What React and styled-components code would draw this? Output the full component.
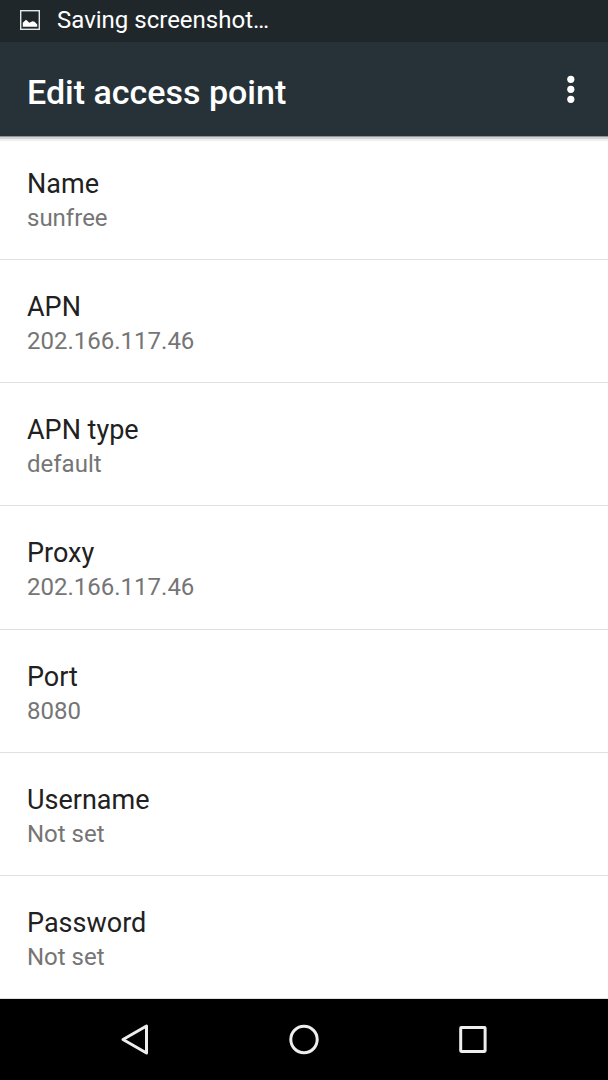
import React from "react";
import styled, { createGlobalStyle } from "styled-components";

const settings = [
  { label: "Name", value: "sunfree" },
  { label: "APN", value: "202.166.117.46" },
  { label: "APN type", value: "default" },
  { label: "Proxy", value: "202.166.117.46" },
  { label: "Port", value: "8080" },
  { label: "Username", value: "Not set" },
  { label: "Password", value: "Not set" },
];

export default function App() {
  return (
    <Screen>
      <GlobalStyle />
      <StatusBar>
        <svg width="20" height="20" viewBox="0 0 20 20" aria-hidden="true">
          <rect x="0.7" y="0.7" width="18.6" height="18.6" fill="none" stroke="#e4e6e7" strokeWidth="1.4" />
          <path d="M2.8 16.8v-4L6 9.8l3.4 3 3-1.6 2.2.6 2.6 2.6v2.4z" fill="#fff" />
        </svg>
        <span>Saving screenshot…</span>
      </StatusBar>

      <Toolbar>
        <Title>Edit access point</Title>
        <IconButton aria-label="More options">
          <svg width="8" height="28" viewBox="0 0 8 28" fill="#fff">
            <circle cx="3.8" cy="4.3" r="3.6" />
            <circle cx="3.8" cy="14.3" r="3.6" />
            <circle cx="3.8" cy="24.3" r="3.6" />
          </svg>
        </IconButton>
      </Toolbar>

      <List>
        {settings.map(({ label, value }) => (
          <Item key={label}>
            <Setting>
              <Label>{label}</Label>
              <Value>{value}</Value>
            </Setting>
          </Item>
        ))}
      </List>

      <NavBar>
        <NavButton aria-label="Back">
          <svg width="32" height="34" viewBox="0 0 32 34">
            <path d="M27.5 3v27L4 16.5z" />
          </svg>
        </NavButton>
        <NavButton aria-label="Home">
          <svg width="32" height="34" viewBox="0 0 32 34">
            <circle cx="16" cy="16.5" r="13.2" />
          </svg>
        </NavButton>
        <NavButton aria-label="Recent apps">
          <svg width="32" height="34" viewBox="0 0 32 34">
            <rect x="3.7" y="4.6" width="24.4" height="23.8" rx="0.6" />
          </svg>
        </NavButton>
      </NavBar>
    </Screen>
  );
}

// Style

const GlobalStyle = createGlobalStyle`
  body {
    margin: 0;
    background: #fff;
    font-family: Roboto, sans-serif;
  }
  button {
    border: 0;
    background: none;
    font: inherit;
    color: inherit;
    cursor: pointer;
  }
`

const Screen = styled.div`
  min-height: 100vh;
  display: flex;
  flex-direction: column;
`

const StatusBar = styled.div`
  height: 42px;
  box-sizing: border-box;
  padding: 0 20px 2px;
  display: flex;
  align-items: center;
  gap: 17px;
  background: #1f272b;
  color: #fff;
  font-size: 24px;
`

const Toolbar = styled.header`
  height: 94px;
  padding-left: 27px;
  display: flex;
  align-items: center;
  justify-content: space-between;
  background: #263238;
  color: #fff;
  border-bottom: 1px solid #8d9295;
  box-shadow: 0 2px 0 #d2d2d2, 0 4px 0 #efefef;
`

const Title = styled.h1`
  margin: 0;
  padding-top: 6px;
  font-size: 34px;
  line-height: 40px;
  font-weight: 500;
`

const IconButton = styled.button`
  width: 74px;
  height: 74px;
  padding: 0;
  display: flex;
  align-items: center;
  justify-content: center;
`

const List = styled.ul`
  flex: 1;
  display: grid;
  grid-auto-rows: 1fr;
  margin: 0;
  padding: 0;
  list-style: none;
`

const Item = styled.li`
  display: flex;
  border-bottom: 1px solid #e0e0e0;
`

const Setting = styled.button`
  flex: 1;
  min-height: 120px;
  padding: 4px 27px 0;
  display: flex;
  flex-direction: column;
  justify-content: center;
  text-align: left;
`

const Label = styled.span`
  color: #212121;
  font-size: 27px;
  line-height: 36px;
`

const Value = styled.span`
  color: #757575;
  font-size: 24px;
  line-height: 32px;
`

const NavBar = styled.nav`
  height: 81px;
  padding: 0 51px;
  display: flex;
  background: #000;
`

const NavButton = styled.button`
  flex: 1;
  padding: 0;
  display: flex;
  align-items: center;
  justify-content: center;

  svg {
    fill: none;
    stroke: #eee;
    stroke-width: 3;
    stroke-linejoin: round;
  }
`
